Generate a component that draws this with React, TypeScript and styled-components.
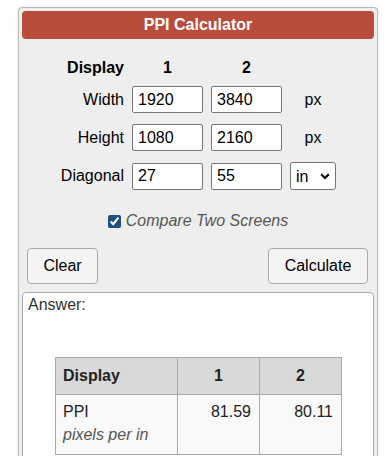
import React from "react";
import styled, { createGlobalStyle } from "styled-components";

const Global = createGlobalStyle`
  html, body { margin: 0; padding: 0; background: #fff; }
  body { font-family: "Liberation Sans", Arial, sans-serif; font-size: 16px; color: #000; }
  * { box-sizing: border-box; }
`;

const Panel = styled.div`
  margin: 7px 0 0 18px;
  width: 360px;
  height: 470px;
  background: #eeeeee;
  border: 1px solid #bbbbbb;
  border-radius: 4px;
  padding: 3px;
  box-shadow: 0 0 3px rgba(0, 0, 0, 0.12);
  overflow: hidden;
`;

const Header = styled.div`
  height: 28px;
  line-height: 28px;
  background: #b94c3b;
  border-radius: 4px;
  color: #fff;
  font-weight: bold;
  font-size: 16px;
  text-align: center;
`;

const Form = styled.div`
  display: grid;
  grid-template-columns: 102px 71px 71px 46px;
  grid-template-rows: 14px 27px 27px 28px;
  column-gap: 8px;
  row-gap: 11px;
  margin-top: 22px;
  align-items: center;
`;

const ColHead = styled.div<{ $align?: string }>`
  font-weight: bold;
  line-height: 14px;
  text-align: ${(p) => p.$align || "center"};
`;

const Label = styled.div`
  text-align: right;
  line-height: 18px;
`;

const Unit = styled.div`
  text-align: center;
`;

const Field = styled.input`
  width: 71px;
  height: 27px;
  border: 1px solid #767676;
  border-radius: 2px;
  background: #fff;
  padding: 0 5px;
  font-family: "Liberation Sans", Arial, sans-serif;
  font-size: 16px;
  color: #000;
  outline: none;
`;

const SelectWrap = styled.div`
  position: relative;
  width: 46px;
  height: 28px;
`;

const Select = styled.select`
  appearance: none;
  width: 46px;
  height: 28px;
  border: 1px solid #767676;
  border-radius: 3px;
  background: #fff;
  padding: 0 0 0 5px;
  font-family: "Liberation Sans", Arial, sans-serif;
  font-size: 16px;
  color: #000;
  outline: none;
`;

const Chevron = styled.svg`
  position: absolute;
  right: 6px;
  top: 11px;
  pointer-events: none;
`;

const CheckRow = styled.label`
  display: flex;
  justify-content: center;
  align-items: center;
  gap: 5px;
  height: 18px;
  margin-top: 22px;
  font-style: italic;
  color: #555;
`;

const Check = styled.input`
  width: 13px;
  height: 13px;
  margin: 0;
  accent-color: #1d4f7f;
`;

const Buttons = styled.div`
  display: flex;
  justify-content: space-between;
  margin-top: 18px;
  padding: 0 6px 0 5px;
`;

const Button = styled.button<{ $w: number }>`
  width: ${(p) => p.$w}px;
  height: 36px;
  background: #f4f4f4;
  border: 1px solid #aaaaaa;
  border-radius: 4px;
  font-family: "Liberation Sans", Arial, sans-serif;
  font-size: 16px;
  color: #000;
  padding: 0;
`;

const AnswerBox = styled.div`
  margin-top: 8px;
  background: #fff;
  border: 1px solid #aaaaaa;
  border-radius: 4px;
  padding: 3px 5px 20px;
  width: 352px;
  height: 200px;
`;

const AnswerLabel = styled.div`
  color: #333;
`;

const Table = styled.table`
  margin: 43px 0 0 27px;
  border-collapse: collapse;
  border: 1px solid #aaaaaa;
`;

const Th = styled.th<{ $w: number; $align: string }>`
  width: ${(p) => p.$w}px;
  height: 37px;
  background: #d9d9d9;
  border: 1px solid #aaaaaa;
  padding: 0 7px;
  font-weight: bold;
  text-align: ${(p) => p.$align};
  color: #222;
`;

const Td = styled.td<{ $align: string }>`
  background: #f9f9f9;
  border: 1px solid #aaaaaa;
  padding: 8px 8px 10px 7px;
  vertical-align: top;
  text-align: ${(p) => p.$align};
  color: #222;
`;

const Sub = styled.div`
  margin-top: 5px;
  font-style: italic;
  color: #555;
`;

export default function App() {
  return (
    <>
      <Global />
      <Panel>
        <Header>PPI Calculator</Header>
        <Form>
          <ColHead $align="right">Display</ColHead>
          <ColHead>1</ColHead>
          <ColHead>2</ColHead>
          <div />
          <Label>Width</Label>
          <Field defaultValue="1920" />
          <Field defaultValue="3840" />
          <Unit>px</Unit>
          <Label>Height</Label>
          <Field defaultValue="1080" />
          <Field defaultValue="2160" />
          <Unit>px</Unit>
          <Label>Diagonal</Label>
          <Field defaultValue="27" />
          <Field defaultValue="55" />
          <SelectWrap>
            <Select defaultValue="in">
              <option value="in">in</option>
              <option value="cm">cm</option>
            </Select>
            <Chevron width="10" height="7" viewBox="0 0 10 7">
              <path d="M1.2 1.2 L5 5 L8.8 1.2" fill="none" stroke="#000" strokeWidth="2.2" />
            </Chevron>
          </SelectWrap>
        </Form>
        <CheckRow>
          <Check type="checkbox" defaultChecked />
          Compare Two Screens
        </CheckRow>
        <Buttons>
          <Button $w={71}>Clear</Button>
          <Button $w={100}>Calculate</Button>
        </Buttons>
        <AnswerBox>
          <AnswerLabel>Answer:</AnswerLabel>
          <Table>
            <thead>
              <tr>
                <Th $w={122} $align="left">Display</Th>
                <Th $w={82} $align="center">1</Th>
                <Th $w={82} $align="center">2</Th>
              </tr>
            </thead>
            <tbody>
              <tr>
                <Td $align="left">
                  PPI
                  <Sub>pixels per in</Sub>
                </Td>
                <Td $align="right">81.59</Td>
                <Td $align="right">80.11</Td>
              </tr>
            </tbody>
          </Table>
        </AnswerBox>
      </Panel>
    </>
  );
}
